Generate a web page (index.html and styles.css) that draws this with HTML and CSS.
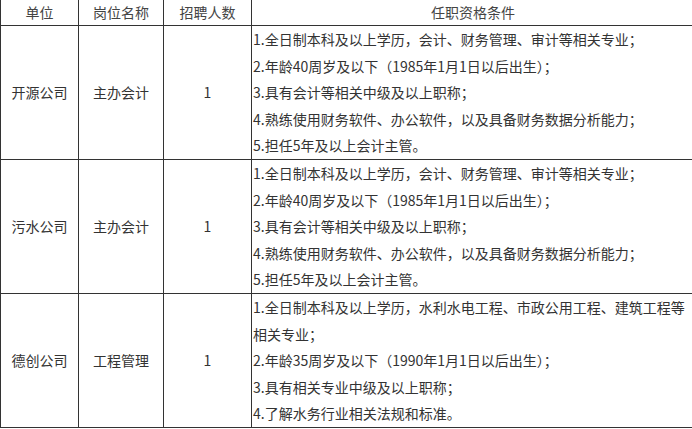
FILE: index.html
```html
<!DOCTYPE html>
<html lang="zh">
<head>
<meta charset="utf-8">
<link rel="stylesheet" href="styles.css">
</head>
<body>
<div class="frame">
<table class="jobs">
  <colgroup>
    <col class="c-unit"><col class="c-post"><col class="c-num"><col class="c-req">
  </colgroup>
  <thead>
    <tr><th>单位</th><th>岗位名称</th><th>招聘人数</th><th>任职资格条件</th></tr>
  </thead>
  <tbody>
    <tr>
      <td class="center">开源公司</td>
      <td class="center">主办会计</td>
      <td class="center">1</td>
      <td class="req">1.全日制本科及以上学历，会计、财务管理、审计等相关专业；<br>2.年龄40周岁及以下（1985年1月1日以后出生）；<br>3.具有会计等相关中级及以上职称；<br>4.熟练使用财务软件、办公软件，以及具备财务数据分析能力；<br>5.担任5年及以上会计主管。</td>
    </tr>
    <tr>
      <td class="center">污水公司</td>
      <td class="center">主办会计</td>
      <td class="center">1</td>
      <td class="req">1.全日制本科及以上学历，会计、财务管理、审计等相关专业；<br>2.年龄40周岁及以下（1985年1月1日以后出生）；<br>3.具有会计等相关中级及以上职称；<br>4.熟练使用财务软件、办公软件，以及具备财务数据分析能力；<br>5.担任5年及以上会计主管。</td>
    </tr>
    <tr>
      <td class="center">德创公司</td>
      <td class="center">工程管理</td>
      <td class="center">1</td>
      <td class="req">1.全日制本科及以上学历，水利水电工程、市政公用工程、建筑工程等相关专业；<br>2.年龄35周岁及以下（1990年1月1日以后出生）；<br>3.具有相关专业中级及以上职称；<br>4.了解水务行业相关法规和标准。</td>
    </tr>
  </tbody>
</table>
</div>
</body>
</html>
```
FILE: styles.css
```css
html, body {
  margin: 0;
  padding: 0;
  background: #fff;
}
.frame {
  width: 692px;
  height: 429px;
  overflow: hidden;
}
.jobs {
  margin-top: -1px;
  width: 694px;
  border-collapse: collapse;
  table-layout: fixed;
  font-family: "Noto Sans CJK SC", "Noto Sans", sans-serif;
  font-size: 14px;
  color: #333;
}
.c-unit { width: 78px; }
.c-post { width: 85px; }
.c-num { width: 88px; }
.c-req { width: 443px; }
.jobs th, .jobs td {
  border: 1px solid #333;
  padding: 0;
}
.jobs th {
  font-weight: normal;
  color: #444;
  height: 25px;
  line-height: 25px;
  text-align: center;
}
.jobs td {
  vertical-align: middle;
  line-height: 26.6px;
}
.center {
  text-align: center;
}
.req {
  text-align: left;
  padding-left: 1px !important;
  padding-right: 3px !important;
}
```
